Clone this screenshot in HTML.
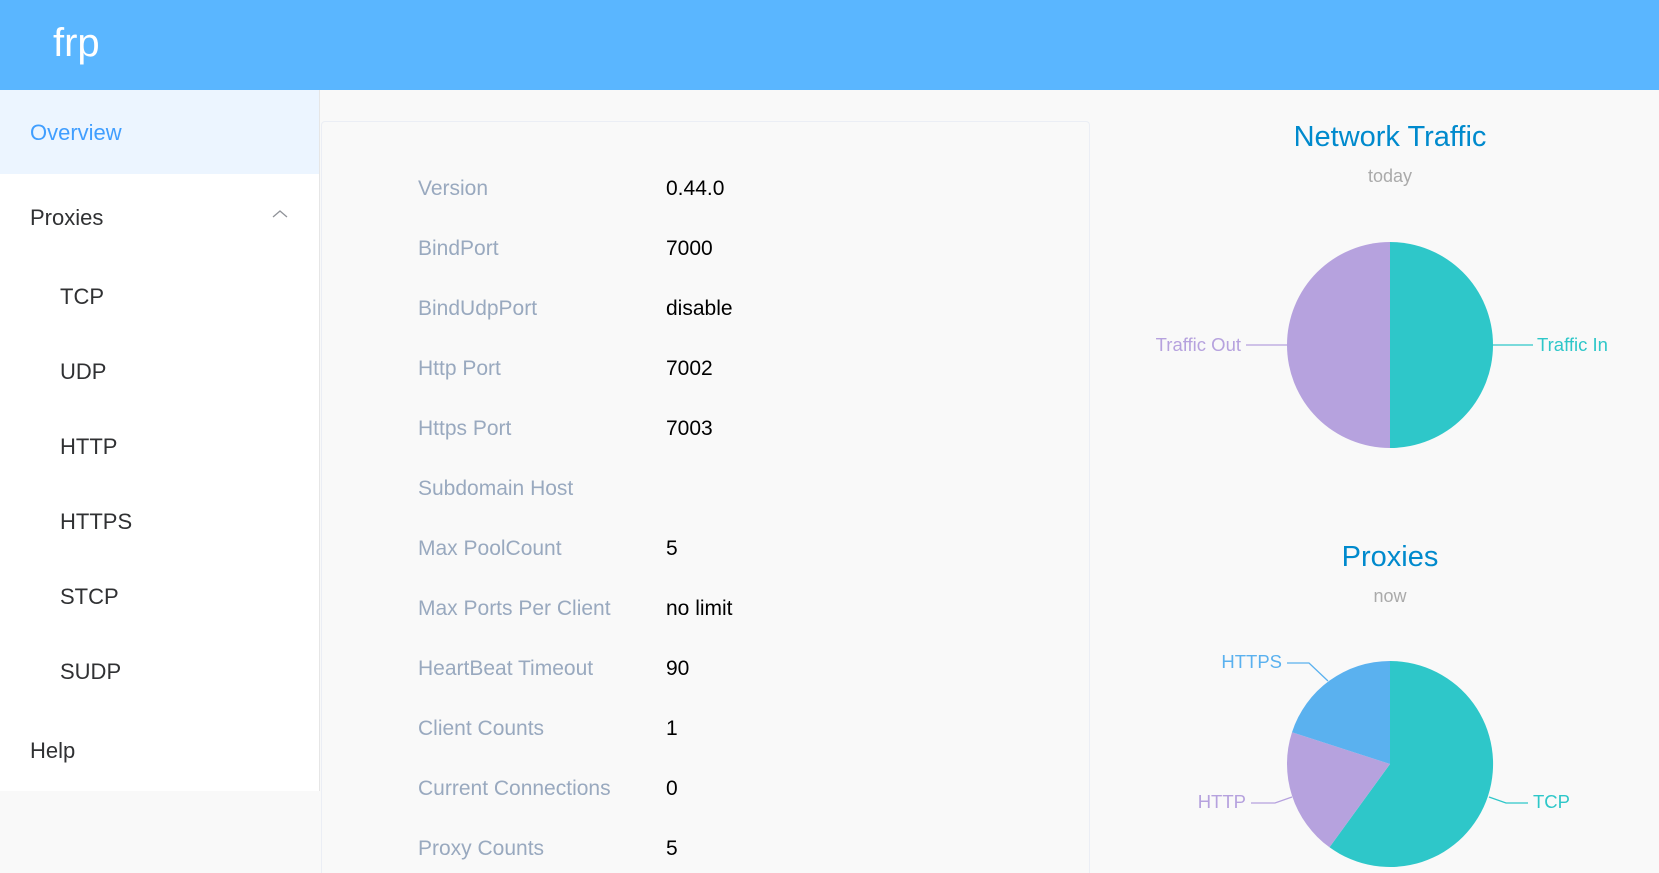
<!DOCTYPE html>
<html style="width:1659px;height:873px;overflow:hidden"><head><meta charset="utf-8"><style>
*{margin:0;padding:0;box-sizing:border-box}
body{width:1659px;height:873px;overflow:hidden;background:#f9f9f9;font-family:"Liberation Sans",sans-serif;position:relative}
.hdr{position:absolute;left:0;top:0;width:1659px;height:90px;background:#5ab6ff}
.hdr span{position:absolute;left:53px;top:21px;color:#fff;font-size:40px}
.side{position:absolute;left:0;top:90px;width:320px;height:701px;background:#fff;border-right:1px solid #e6e6e6}
.act{position:absolute;left:0;top:0;width:319px;height:84px;background:#ecf5ff}
.mi{position:absolute;font-size:22px;color:#303133}
.card{position:absolute;left:321px;top:121px;width:769px;height:752px;border:1px solid #ebeef5;border-bottom:none;border-radius:4px 4px 0 0;background:#f9f9f9}
.l{position:absolute;left:418px;font-size:21px;color:#99a9bf}
.v{position:absolute;left:666px;font-size:21px;color:#000}
.t{position:absolute;width:300px;left:1240px;text-align:center;color:#008acd;font-size:29px}
.s{position:absolute;width:300px;left:1240px;text-align:center;color:#aaa;font-size:18px}
</style></head><body>
<div class="hdr"><span>frp</span></div>
<div class="side"><div class="act"></div></div>
<div class="mi" style="left:30px;top:120px;color:#409eff">Overview</div>
<div class="mi" style="left:30px;top:205px">Proxies</div>
<svg style="position:absolute;left:272px;top:209px" width="16" height="10"><path d="M1 8 L8 2 L15 8" fill="none" stroke="#909399" stroke-width="1.3"/></svg>
<div class="mi" style="left:60px;top:284px">TCP</div>
<div class="mi" style="left:60px;top:359px">UDP</div>
<div class="mi" style="left:60px;top:434px">HTTP</div>
<div class="mi" style="left:60px;top:509px">HTTPS</div>
<div class="mi" style="left:60px;top:584px">STCP</div>
<div class="mi" style="left:60px;top:659px">SUDP</div>
<div class="mi" style="left:30px;top:738px">Help</div>
<div class="card"></div>
<div class="l" style="top:177px">Version</div><div class="v" style="top:177px">0.44.0</div>
<div class="l" style="top:237px">BindPort</div><div class="v" style="top:237px">7000</div>
<div class="l" style="top:297px">BindUdpPort</div><div class="v" style="top:297px">disable</div>
<div class="l" style="top:357px">Http Port</div><div class="v" style="top:357px">7002</div>
<div class="l" style="top:417px">Https Port</div><div class="v" style="top:417px">7003</div>
<div class="l" style="top:477px">Subdomain Host</div>
<div class="l" style="top:537px">Max PoolCount</div><div class="v" style="top:537px">5</div>
<div class="l" style="top:597px">Max Ports Per Client</div><div class="v" style="top:597px">no limit</div>
<div class="l" style="top:657px">HeartBeat Timeout</div><div class="v" style="top:657px">90</div>
<div class="l" style="top:717px">Client Counts</div><div class="v" style="top:717px">1</div>
<div class="l" style="top:777px">Current Connections</div><div class="v" style="top:777px">0</div>
<div class="l" style="top:837px">Proxy Counts</div><div class="v" style="top:837px">5</div>
<div class="t" style="top:121px">Network Traffic</div>
<div class="s" style="top:166px">today</div>
<div class="t" style="top:541px">Proxies</div>
<div class="s" style="top:586px">now</div>
<svg style="position:absolute;left:0;top:0" width="1659" height="873">
<path d="M1390 242 A103 103 0 0 1 1390 448 Z" fill="#2ec7c9"/>
<path d="M1390 242 A103 103 0 0 0 1390 448 Z" fill="#b6a2de"/>
<line x1="1493" y1="345" x2="1533" y2="345" stroke="#2ec7c9" stroke-width="1.3"/>
<line x1="1246" y1="345" x2="1287" y2="345" stroke="#b6a2de" stroke-width="1.3"/>
<text x="1537" y="351" font-size="18.5" fill="#2ec7c9" font-family="Liberation Sans">Traffic In</text>
<text x="1241" y="351" font-size="18.5" fill="#b6a2de" font-family="Liberation Sans" text-anchor="end">Traffic Out</text>
<path d="M1390 764 L1390 661 A103 103 0 1 1 1329.5 847.3 Z" fill="#2ec7c9"/>
<path d="M1390 764 L1329.5 847.3 A103 103 0 0 1 1292 732.2 Z" fill="#b6a2de"/>
<path d="M1390 764 L1292 732.2 A103 103 0 0 1 1390 661 Z" fill="#5ab1ef"/>
<polyline points="1287,663 1309,663 1328,681" fill="none" stroke="#5ab1ef" stroke-width="1.3"/>
<polyline points="1251,803 1275,803 1292,797" fill="none" stroke="#b6a2de" stroke-width="1.3"/>
<polyline points="1489,797 1506,803 1528,803" fill="none" stroke="#2ec7c9" stroke-width="1.3"/>
<text x="1282" y="668" font-size="18.5" fill="#5ab1ef" font-family="Liberation Sans" text-anchor="end">HTTPS</text>
<text x="1246" y="808" font-size="18.5" fill="#b6a2de" font-family="Liberation Sans" text-anchor="end">HTTP</text>
<text x="1533" y="808" font-size="18.5" fill="#2ec7c9" font-family="Liberation Sans">TCP</text>
</svg>
</body></html>
